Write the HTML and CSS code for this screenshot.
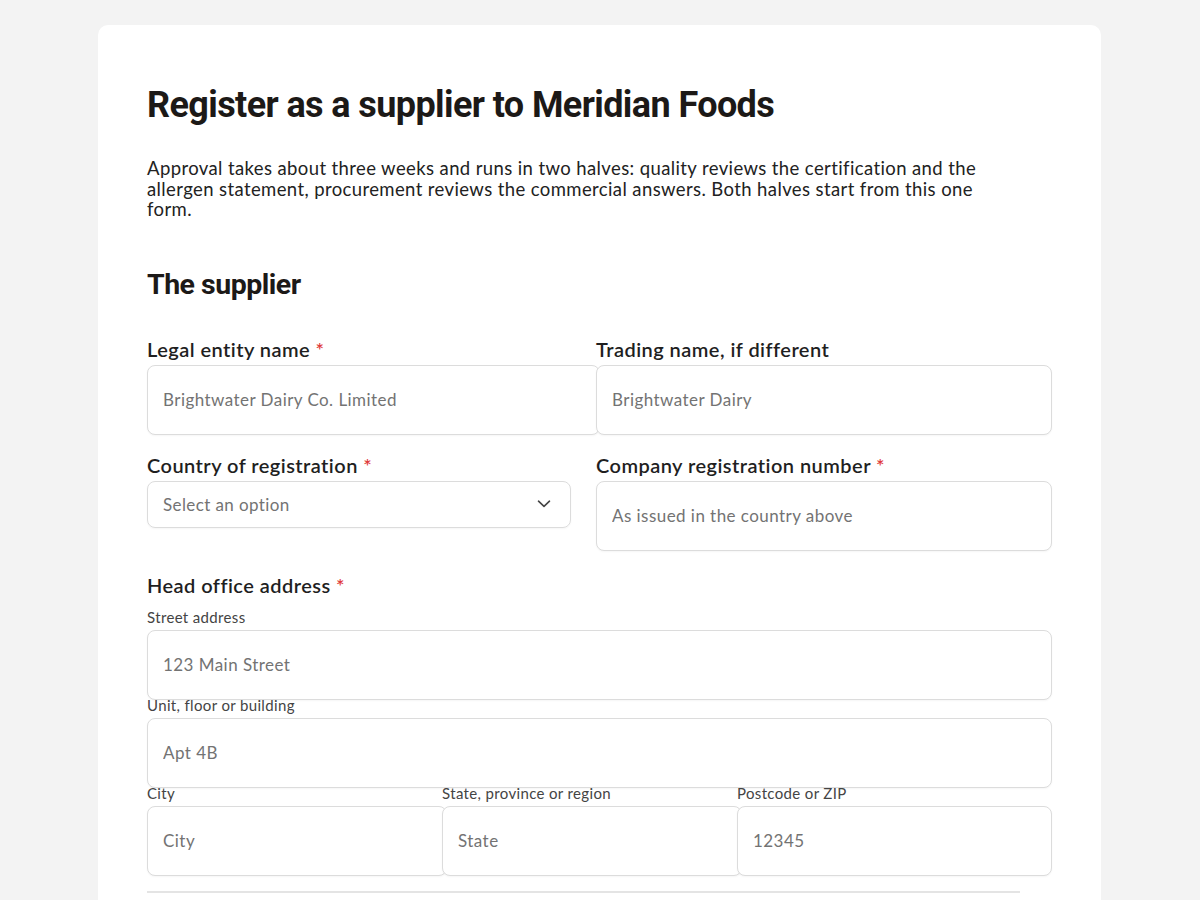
FILE: index.html
```html
<!DOCTYPE html>
<html lang="en">
<head>
<meta charset="utf-8">
<title>Register as a supplier to Meridian Foods</title>
<link rel="stylesheet" href="styles.css">
</head>
<body>
<main class="card">
  <h1 class="title">Register as a supplier to Meridian Foods</h1>
  <p class="intro">Approval takes about three weeks and runs in two halves: quality reviews the certification and the allergen statement, procurement reviews the commercial answers. Both halves start from this one form.</p>

  <h2 class="section-title">The supplier</h2>

  <div class="row two">
    <div class="field">
      <label class="label">Legal entity name <span class="req">*</span></label>
      <input class="input wide" type="text" placeholder="Brightwater Dairy Co. Limited">
    </div>
    <div class="field">
      <label class="label">Trading name, if different</label>
      <input class="input" type="text" placeholder="Brightwater Dairy">
    </div>
  </div>

  <div class="row two">
    <div class="field">
      <label class="label">Country of registration <span class="req">*</span></label>
      <div class="select">
        <span class="select-text">Select an option</span>
        <svg class="chevron" width="14" height="8" viewBox="0 0 14 8"><path d="M1.5 1.2 L7 6.4 L12.5 1.2" fill="none" stroke="#444" stroke-width="1.6" stroke-linecap="round" stroke-linejoin="round"/></svg>
      </div>
    </div>
    <div class="field">
      <label class="label">Company registration number <span class="req">*</span></label>
      <input class="input" type="text" placeholder="As issued in the country above">
    </div>
  </div>

  <div class="address">
    <div class="label head">Head office address <span class="req">*</span></div>
    <label class="sublabel first">Street address</label>
    <input class="input" type="text" placeholder="123 Main Street">
    <label class="sublabel">Unit, floor or building</label>
    <input class="input" type="text" placeholder="Apt 4B">
    <div class="row three">
      <div class="field">
        <label class="sublabel">City</label>
        <input class="input wide3" type="text" placeholder="City">
      </div>
      <div class="field">
        <label class="sublabel">State, province or region</label>
        <input class="input wide3" type="text" placeholder="State">
      </div>
      <div class="field">
        <label class="sublabel">Postcode or ZIP</label>
        <input class="input" type="text" placeholder="12345">
      </div>
    </div>
  </div>

  <div class="next-box"></div>
</main>
</body>
</html>
```
FILE: styles.css
```css
* { box-sizing: border-box; }
html, body { margin: 0; padding: 0; }
body {
  background: #f3f3f3;
  font-family: "Lato", "Noto Sans", sans-serif;
  color: #222;
}
.card {
  width: 1003px;
  margin: 25px 0 0 98px;
  background: #fff;
  border-radius: 10px 10px 0 0;
  padding: 59px 49px 40px 49px;
  min-height: 900px;
}
.title {
  font-family: "Roboto", sans-serif;
  font-weight: 700;
  font-size: 36px;
  line-height: 42px;
  letter-spacing: -0.6px;
  color: #1c1917;
  margin: 0;
}
.intro {
  font-size: 18.5px;
  letter-spacing: 0.39px;
  line-height: 20.5px;
  margin: 32px 0 0 0;
  color: #222;
  max-width: 860px;
}
.section-title {
  font-family: "Roboto", sans-serif;
  font-weight: 700;
  font-size: 28.5px;
  line-height: 34px;
  letter-spacing: -0.5px;
  color: #1c1917;
  margin: 48px 0 0 0;
}
.row { display: grid; }
.row.two { grid-template-columns: 449px 1fr; align-items: start; }
.row.three { grid-template-columns: 295px 295px 1fr; }
.section-title + .row { margin-top: 36px; }
.row.two + .row.two { margin-top: 19px; }
.field { display: flex; flex-direction: column; min-width: 0; }
.label {
  display: block;
  font-size: 20px;
  letter-spacing: 0.45px;
  font-weight: 600;
  line-height: 22px;
  color: #1f1f1f;
  margin-bottom: 5px;
}
.req { color: #e03c3c; }
.input {
  display: block;
  width: 100%;
  height: 70px;
  border: 1px solid #dcdcdc;
  border-radius: 8px;
  padding: 0 15px;
  font-family: "Lato", "Noto Sans", sans-serif;
  font-size: 17px;
  letter-spacing: 0.45px;
  color: #222;
  background: #fff;
  box-shadow: 0 1px 2px rgba(0,0,0,0.04);
  outline: none;
}
.input::placeholder { color: #737373; }
.input.wide { width: calc(100% + 4px); }
.input.wide3 { width: calc(100% + 5px); }
.select {
  width: 424px;
  height: 47px;
  border: 1px solid #dcdcdc;
  border-radius: 8px;
  padding: 0 19px 0 15px;
  display: flex;
  align-items: center;
  justify-content: space-between;
  box-shadow: 0 1px 2px rgba(0,0,0,0.04);
}
.select-text { font-size: 17px; letter-spacing: 0.4px; color: #737373; }
.address { margin-top: 23px; }
.address .label.head { margin-bottom: 16px; }
.sublabel {
  display: block;
  font-size: 15px;
  letter-spacing: 0.35px;
  line-height: 15px;
  color: #444;
  margin: -2px 0 5px 0;
}
.sublabel.first { margin-bottom: 5px; }
.next-box {
  margin-top: 15px;
  width: 873px;
  height: 40px;
  border-top: 2px solid #e4e4e4;
}
```
